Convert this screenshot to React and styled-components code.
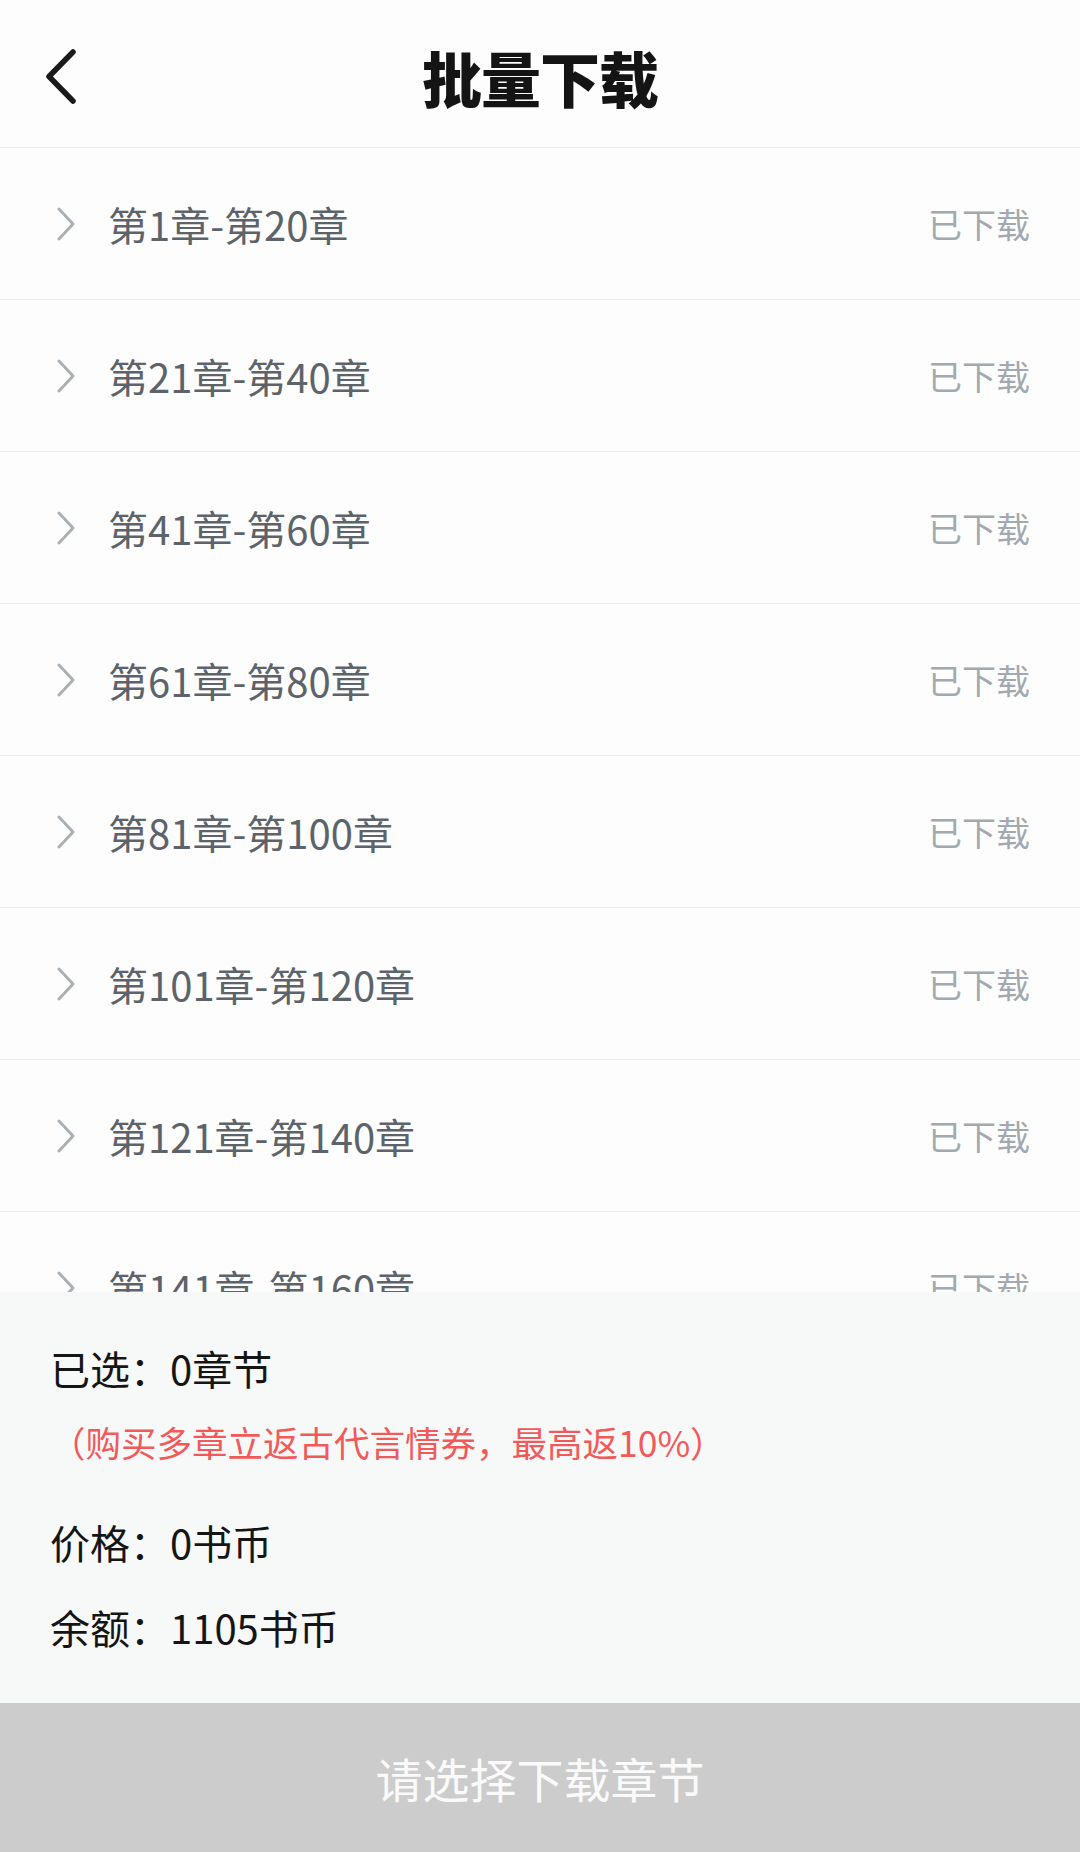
import styled, { createGlobalStyle } from "styled-components";

const GlobalStyle = createGlobalStyle`
    html, body {
        margin: 0;
        padding: 0;
    }
    body {
        font-family: "Noto Sans CJK SC", "Noto Sans", sans-serif;
        background: #fdfdfd;
    }
`;

const Page = styled.div`
    display: flex;
    flex-direction: column;
    height: 100vh;
    overflow: hidden;
    background: #fdfdfd;
`;

const Header = styled.header`
    position: relative;
    display: flex;
    align-items: center;
    justify-content: center;
    height: 147px;
    flex-shrink: 0;
    border-bottom: 1px solid #eff0f0;
    background: #fdfdfd;
`;

const BackButton = styled.button`
    position: absolute;
    left: 36px;
    top: 42px;
    width: 52px;
    height: 70px;
    padding: 0;
    border: none;
    background: none;
    display: flex;
    align-items: center;
    justify-content: center;
    cursor: pointer;
`;

const Title = styled.h1`
    margin: 6px 0 0;
    font-size: 60px;
    font-weight: 900;
    line-height: 1;
    color: #141414;
    letter-spacing: -1px;
`;

const List = styled.ul`
    flex: 1;
    margin: 0;
    padding: 0;
    list-style: none;
    overflow: hidden;
`;

const Row = styled.li`
    display: flex;
    align-items: center;
    height: 151px;
    padding: 0 50px 0 56px;
    border-bottom: 1px solid #eff0f0;
`;

const RowLabel = styled.span`
    flex: 1;
    margin-left: 32px;
    font-size: 40px;
    line-height: 1;
    color: #5d636a;
`;

const RowStatus = styled.span`
    font-size: 34px;
    line-height: 1;
    color: #a2a9af;
`;

const Summary = styled.section`
    flex-shrink: 0;
    display: flex;
    flex-direction: column;
    padding: 46px 50px 46px;
    background: #f7f9f9;
`;

const InfoLine = styled.div`
    line-height: 60px;
    font-size: ${(p) => (p.$small ? "35.5px" : "40px")};
    color: ${(p) => (p.$accent ? "#f25a5a" : "#151515")};
    margin-top: ${(p) => p.$gap || 0}px;
    white-space: nowrap;
`;

const SubmitButton = styled.button`
    flex-shrink: 0;
    height: 149px;
    width: 100%;
    border: none;
    background: #cccccc;
    color: #fafafa;
    font-family: "Noto Sans CJK SC", "Noto Sans", sans-serif;
    font-size: 47px;
    cursor: default;
`;

const chapters = Array.from({ length: 8 }, (_, i) => {
    const start = i * 20 + 1;
    return `第${start}章-第${start + 19}章`;
});

function BackIcon() {
    return (
        <svg width="40" height="60" viewBox="0 0 40 60" fill="none">
            <path
                d="M31 5 L7 29.5 L31 54"
                stroke="#1a1a1a"
                strokeWidth="5.5"
                strokeLinecap="round"
                strokeLinejoin="round"
            />
        </svg>
    );
}

function ChevronIcon() {
    return (
        <svg width="20" height="34" viewBox="0 0 20 34" fill="none">
            <path
                d="M3 2 L17 17 L3 32"
                stroke="#a9b0b6"
                strokeWidth="3"
                strokeLinecap="round"
                strokeLinejoin="round"
            />
        </svg>
    );
}

export default function App() {
    return (
        <>
            <GlobalStyle />
            <Page>
                <Header>
                    <BackButton aria-label="返回">
                        <BackIcon />
                    </BackButton>
                    <Title>批量下载</Title>
                </Header>

                <List>
                    {chapters.map((name) => (
                        <Row key={name}>
                            <ChevronIcon />
                            <RowLabel>{name}</RowLabel>
                            <RowStatus>已下载</RowStatus>
                        </Row>
                    ))}
                </List>

                <Summary>
                    <InfoLine>已选：0章节</InfoLine>
                    <InfoLine $small $accent $gap={14}>
                        （购买多章立返古代言情券，最高返10%）
                    </InfoLine>
                    <InfoLine $gap={40}>价格：0书币</InfoLine>
                    <InfoLine $gap={25}>余额：1105书币</InfoLine>
                </Summary>

                <SubmitButton>请选择下载章节</SubmitButton>
            </Page>
        </>
    );
}
